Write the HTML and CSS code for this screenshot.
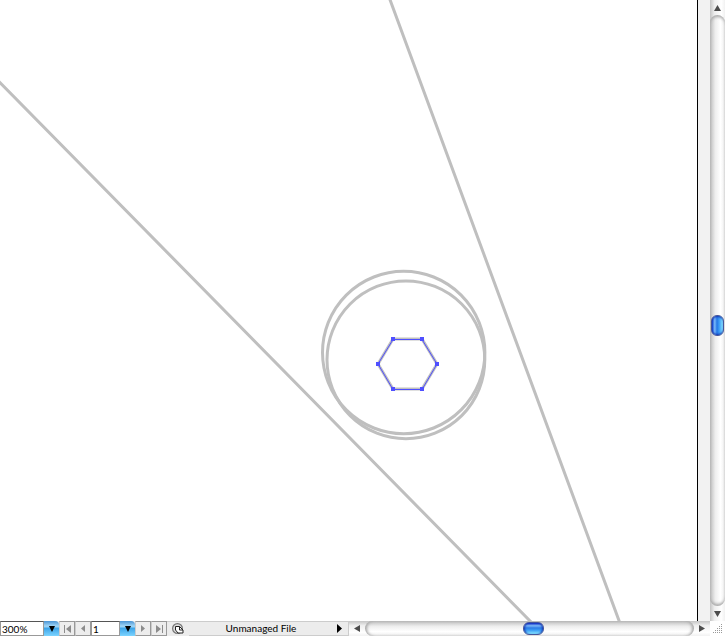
FILE: index.html
```html
<!DOCTYPE html>
<html lang="en">
<head>
<meta charset="utf-8">
<title>Document</title>
<link rel="stylesheet" href="styles.css">
</head>
<body>
<div class="window">
  <main class="artboard">
    <svg class="drawing" viewBox="0 0 697 621" preserveAspectRatio="xMinYMin slice" aria-label="Drawing">
      <g fill="none" stroke="#bfbfbf" stroke-width="3">
        <path d="M-2 80.500L534 625M389 -3L621 626"/>
        <circle cx="403.700" cy="352.500" r="81.200"/>
        <circle cx="405.900" cy="359.800" r="78.900"/>
        <path d="M393 339H422L437 364L422 389H393L378 364Z"/>
      </g>
      <path d="M393 339.500H422L437 364L422 389.500H393L378 364Z" fill="none" stroke="#4f4fff"/>
      <path d="M391 337h4v4h-4zM420 337h4v4h-4zM435 362h4v4h-4zM420 387h4v4h-4zM391 387h4v4h-4zM376 362h4v4h-4z" fill="#4f4fff"/>
    </svg>
  </main>
  <div class="vbar">
    <button class="arrow" aria-label="Scroll up"><svg width="7" height="6"><path d="M0 6L3.500 0L7 6Z"/></svg></button>
    <input class="range vertical" type="range" min="0" max="1000" value="526" aria-label="Vertical scroll">
    <button class="arrow" aria-label="Scroll down"><svg width="7" height="6"><path d="M0 0L3.500 6L7 0Z"/></svg></button>
  </div>
  <footer class="status">
    <input class="field zoom" type="text" value="300%" aria-label="Zoom">
    <button class="drop" aria-label="Zoom levels"><svg width="6" height="6"><path d="M0 0H6L3 6Z"/></svg></button>
    <button class="step" aria-label="First page"><svg width="7" height="8"><path d="M0 0h1v8H0zM7 0V8L2 4Z"/></svg></button>
    <button class="step" aria-label="Previous page"><svg width="4" height="7"><path d="M4 0V7L0 3.500Z"/></svg></button>
    <input class="field page" type="text" value="1" aria-label="Page">
    <button class="drop" aria-label="Pages"><svg width="6" height="6"><path d="M0 0H6L3 6Z"/></svg></button>
    <button class="step" aria-label="Next page"><svg width="4" height="7"><path d="M0 0V7L4 3.500Z"/></svg></button>
    <button class="step" aria-label="Last page"><svg width="7" height="8"><path d="M6 0h1v8H6zM0 0V8L5 4Z"/></svg></button>
    <button class="version" aria-label="File status">
      <svg width="12" height="12"><circle cx="5.500" cy="5.500" r="4.900" fill="#ddd" stroke="#777" stroke-width="1.200"/><path d="M3.500 3.500H7.500L11 7V10H6L3.500 7Z" fill="#fff" stroke="#222"/><path d="M7.500 3.500V7H11" fill="none" stroke="#222"/></svg>
    </button>
    <button class="file"><span class="name">Unmanaged File</span><svg width="5" height="9"><path d="M0 0V9L5 4.500Z"/></svg></button>
    <div class="hbar">
      <button class="arrow" aria-label="Scroll left"><svg width="6" height="7"><path d="M6 0V7L0 3.500Z"/></svg></button>
      <input class="range horizontal" type="range" min="0" max="1000" value="512" aria-label="Horizontal scroll">
      <button class="arrow" aria-label="Scroll right"><svg width="6" height="7"><path d="M0 0V7L6 3.500Z"/></svg></button>
    </div>
    <svg class="grip" width="15" height="15"><path d="M11 3h1v1h-1zM9 5h1v1H9zM11 5h1v1h-1zM7 7h1v1H7zM9 7h1v1H9zM11 7h1v1h-1zM5 9h1v1H5zM7 9h1v1H7zM9 9h1v1H9zM11 9h1v1h-1zM3 11h1v1H3zM5 11h1v1H5zM7 11h1v1H7zM9 11h1v1H9zM11 11h1v1h-1z" fill="#999"/></svg>
  </footer>
</div>
</body>
</html>
```
FILE: styles.css
```css
* { box-sizing: border-box; }

body {
  margin: 0;
  background: #fff;
  color: #000;
  font: 10px/13px Lato, "Open Sans", sans-serif;
}

.window {
  display: grid;
  grid-template: minmax(0, 1fr) 15px / minmax(0, 1fr) 15px;
  height: 100vh;
  overflow: hidden;
}

.artboard {
  min-width: 0;
  min-height: 0;
  background: #fff;
  border-right: 12px solid #f2f2f2;
  overflow: hidden;
}

.drawing {
  display: block;
  width: 100%;
  height: 100%;
  border-right: 1px solid #000;
}

button {
  display: flex;
  align-items: center;
  justify-content: center;
  flex: none;
  margin: 0;
  padding: 0;
  border: 0;
  background: none;
  color: inherit;
  font: inherit;
}

svg { flex: none; }

.vbar {
  display: flex;
  flex-direction: column;
  min-height: 0;
  background: linear-gradient(90deg, #c4c4c4, #eee 30%, #fff 75%, #f1f1f1);
}

.vbar .arrow { width: 15px; height: 15px; }

.arrow { fill: #4c4c4c; }

.range {
  flex: 1;
  min-width: 0;
  min-height: 0;
  margin: 0;
  appearance: none;
  border-radius: 8px;
}

.vertical {
  width: 15px;
  writing-mode: vertical-lr;
  background: linear-gradient(90deg, #bdbdbd, #eee 35%, #fff 70%, #eee);
  box-shadow: inset 0 3px 3px -1px #aaa, inset 0 -3px 3px -1px #aaa;
}

.horizontal {
  height: 15px;
  background: linear-gradient(#bdbdbd, #eee 35%, #fff 70%, #eee);
  box-shadow: inset 3px 0 3px -1px #aaa, inset -3px 0 3px -1px #aaa;
}

.range::-webkit-slider-thumb {
  appearance: none;
  border: 1px solid #46569a;
  border-radius: 6px;
}

.vertical::-webkit-slider-thumb {
  width: 13px;
  height: 21px;
  background: linear-gradient(90deg, #0a35c8, #7bbcfa 25%, #2577e4 45%, #3b9df5 65%, #8be4ff);
  box-shadow: inset 0 2px 2px -1px #1238b8, inset 0 -2px 2px -1px #1238b8;
}

.horizontal::-webkit-slider-thumb {
  width: 21px;
  height: 13px;
  background: linear-gradient(#0a20c0, #7bb8f8 25%, #2c7ce6 45%, #3b9df5 65%, #8be9ff);
  box-shadow: inset 2px 0 2px -1px #1238b8, inset -2px 0 2px -1px #1238b8;
}

.status {
  grid-column: 1 / -1;
  display: flex;
  min-width: 0;
  background: #ececec;
}

.field {
  flex: none;
  height: 15px;
  margin: 0;
  padding: 0 1px;
  border: 1px solid #999;
  border-top-color: #555;
  border-radius: 0;
  background: #fff;
  color: #000;
  font: inherit;
}

.zoom { width: 44px; }
.page { width: 29px; }

.drop {
  width: 15px;
  border-radius: 0 4px 0 0;
  background: linear-gradient(#4a94d4, #a4d8f8 35%, #3fa6ea 50%, #7cd4ff);
}

.step {
  width: 16px;
  border: 1px solid #999;
  border-left-color: #ccc;
  background: #ededed;
  fill: #8c8c8c;
}

.version {
  width: 22px;
  border-top: 1px solid #ccc;
}

.file {
  width: 160px;
  padding: 0 6px 0 0;
  border: 1px solid #ccc;
  border-width: 1px 1px 1px 0;
  background: #ececec;
}

.name {
  flex: 1;
  padding-right: 4px;
}

.hbar {
  display: flex;
  flex: 1;
  min-width: 0;
  background: linear-gradient(#c4c4c4, #eee 30%, #fff 75%, #f1f1f1);
}

.hbar .arrow { width: 16px; height: 15px; }

.grip {
  background: #fff;
}
```
